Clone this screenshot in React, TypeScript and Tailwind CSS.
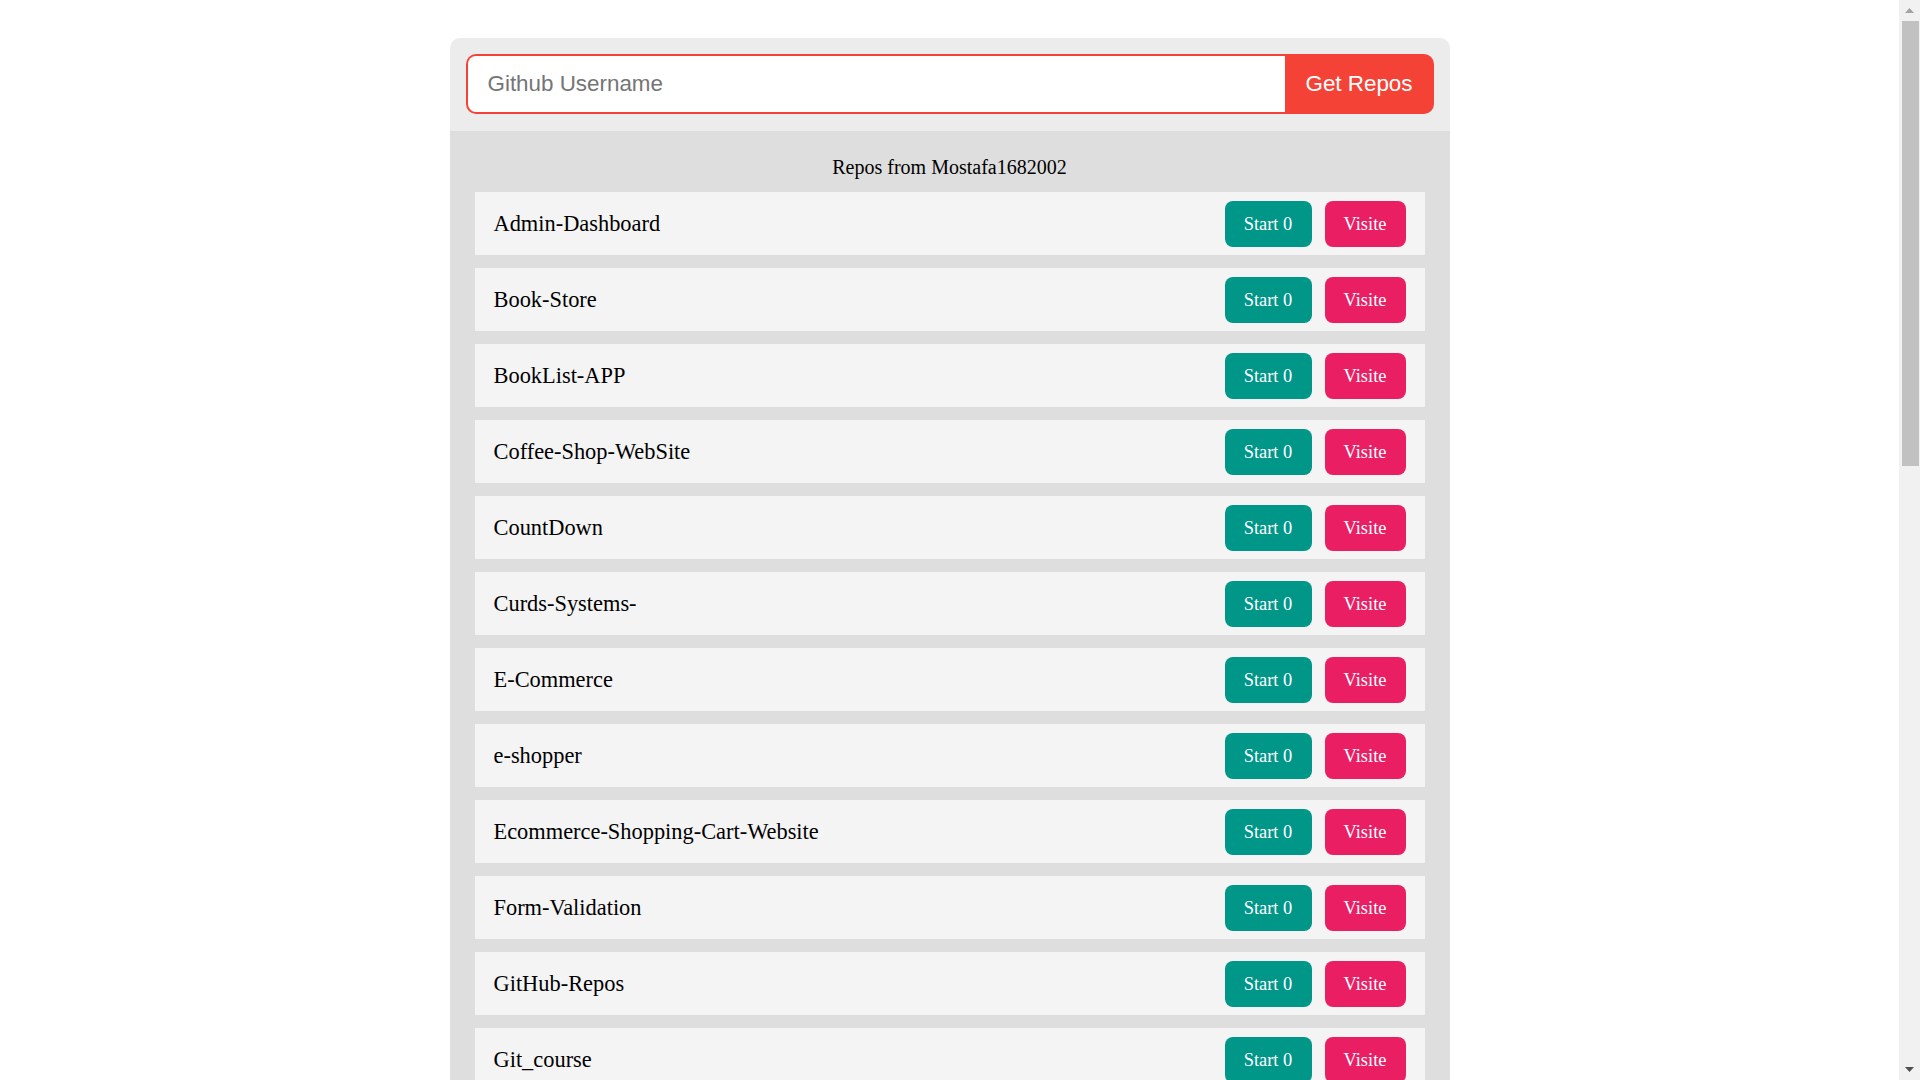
import React from "react";

const repos = [
  "Admin-Dashboard",
  "Book-Store",
  "BookList-APP",
  "Coffee-Shop-WebSite",
  "CountDown",
  "Curds-Systems-",
  "E-Commerce",
  "e-shopper",
  "Ecommerce-Shopping-Cart-Website",
  "Form-Validation",
  "GitHub-Repos",
  "Git_course",
  "Google-Clone",
  "Hotel-Website",
  "Landing-Page",
  "Mostafa1682002",
  "Movie-App",
  "Netflix-Clone",
  "Portfolio",
  "Quiz-App",
  "React-Todo",
  "Recipe-App",
  "Restaurant",
  "Shopping-Cart",
  "Space-Tourism",
  "Tic-Tac-Toe",
  "Todo-List",
  "Weather-App",
  "Website-Template",
  "X-O-Game",
];

function Scrollbar() {
  return (
    <div className="flex h-screen w-[21px] shrink-0 flex-col items-center bg-[#f1f1f1]">
      <div className="flex h-[21px] w-full items-center justify-center">
        <svg width="9" height="5" viewBox="0 0 9 5">
          <polygon points="0,5 9,5 4.5,0" fill="#a3a3a3" />
        </svg>
      </div>
      <div className="ml-[1px] h-[445px] w-[17px] bg-[#c1c1c1]" />
      <div className="flex-1" />
      <div className="flex h-[21px] w-full items-center justify-center">
        <svg width="9" height="5" viewBox="0 0 9 5">
          <polygon points="0,0 9,0 4.5,5" fill="#505050" />
        </svg>
      </div>
    </div>
  );
}

export default function App() {
  return (
    <div className="flex h-screen overflow-hidden bg-white">
      <div className="h-screen flex-1 overflow-hidden pt-[38px]">
        <div className="mx-auto w-[1000px]">
          <div className="rounded-t-[10px] bg-[#ececec] px-4 pt-4 pb-[17px]">
            <div className="flex h-[60px]">
              <input
                className="h-full flex-1 rounded-l-[10px] border-2 border-r-0 border-[#f44336] bg-white px-[20px] text-[22.4px] text-black outline-none placeholder:text-[#757575]"
                style={{ fontFamily: '"Liberation Sans", Arial, sans-serif' }}
                placeholder="Github Username"
              />
              <button
                className="h-full w-[149px] rounded-r-[10px] bg-[#f44336] text-[22.4px] text-white"
                style={{ fontFamily: '"Liberation Sans", Arial, sans-serif' }}
              >
                Get Repos
              </button>
            </div>
          </div>
          <div
            className="bg-[#dedede] px-[25px] pt-[25px] pb-[25px] text-black"
            style={{ fontFamily: '"Liberation Serif", "Times New Roman", serif' }}
          >
            <div className="mb-[13px] text-center text-[20px] leading-[23px]">
              Repos from Mostafa1682002
            </div>
            <div className="flex flex-col gap-[13px]">
              {repos.map((name) => (
                <div
                  key={name}
                  className="flex h-[63px] items-center justify-between bg-[#f4f4f4] pl-[19px] pr-[19px]"
                >
                  <span className="text-[22.4px]">{name}</span>
                  <div className="flex items-center gap-[13px]">
                    <span className="flex h-[46px] w-[87px] items-center justify-center rounded-[8px] bg-[#009688] pt-[2px] text-[18.4px] text-white">
                      Start 0
                    </span>
                    <span className="flex h-[46px] w-[81px] items-center justify-center rounded-[8px] bg-[#e91e63] pt-[2px] text-[18.4px] text-white">
                      Visite
                    </span>
                  </div>
                </div>
              ))}
            </div>
          </div>
        </div>
      </div>
      <Scrollbar />
    </div>
  );
}
